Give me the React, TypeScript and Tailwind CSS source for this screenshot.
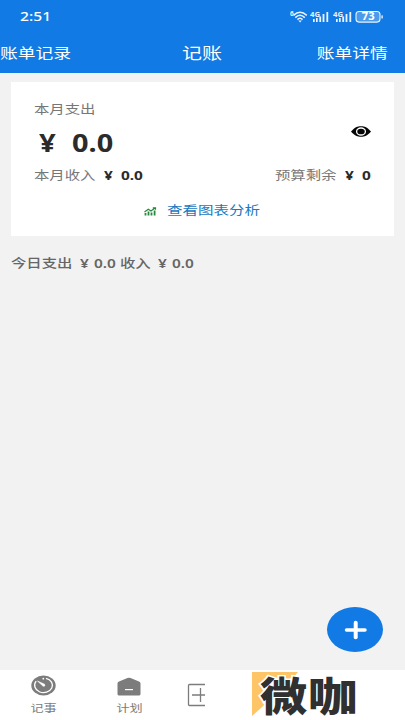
import React from 'react';
import clsx from 'clsx';

interface LabelProps {
  children: React.ReactNode;
  className?: string;
}

// Wide lettering used across the whole page
function Label({ children, className }: LabelProps) {
  return (
    <span className={clsx('inline-block whitespace-pre scale-x-125', className)}>{children}</span>
  );
}

function SignalIcon() {
  return (
    <svg width="19" height="14" viewBox="0 0 19 14" fill="#e8f3ff">
      <text x="0" y="6.8" fontSize="7.5" fontWeight="700" textLength="10" lengthAdjust="spacingAndGlyphs">4G</text>
      <rect x="3" y="9" width="1.7" height="3" />
      <rect x="6" y="8" width="1.7" height="4" />
      <rect x="9.3" y="6.5" width="1.8" height="5.5" />
      <rect x="12.6" y="4" width="1.8" height="8" />
      <rect x="16.4" y="2" width="1.8" height="10" />
    </svg>
  );
}

function StatusIcons() {
  return (
    <div className="flex items-center">
      <svg width="18" height="14" viewBox="0 0 18 14" fill="none" stroke="#e8f3ff" strokeWidth="1.5">
        <text x="0" y="6" fontSize="6.5" fontWeight="700" fill="#e8f3ff" stroke="none">6</text>
        <path d="M3.5 5.4Q10 -1 16.8 5.4" />
        <path d="M5.3 7.6Q10 3 14.8 7.6" />
        <path d="M7.4 9.6Q10 7 12.6 9.6" />
        <path d="M8.4 10.6h3.4l-1.7 1.8z" fill="#e8f3ff" stroke="none" />
      </svg>
      <div className="ml-[2px] mr-px flex gap-[4px]">
        <SignalIcon />
        <SignalIcon />
      </div>
      <svg className="ml-[2px]" width="29" height="14" viewBox="0 0 29 14">
        <rect x="1" y="1.5" width="24" height="10.6" rx="3" fill="#4b9bec" stroke="#e8f3ff" strokeWidth="1.1" />
        <rect x="26.4" y="5.2" width="1.4" height="3.4" rx="0.6" fill="#e8f3ff" />
        <text x="6.8" y="10.4" fontSize="10" fontWeight="700" fill="#fff" textLength="12.8" lengthAdjust="spacingAndGlyphs">73</text>
      </svg>
    </div>
  );
}

function EyeIcon() {
  return (
    <svg width="20" height="11" viewBox="0 0 20 11">
      <path d="M0 5.5C3.5 1.4 6.5 0.2 10 0.2S16.5 1.4 20 5.5C16.5 9.6 13.5 10.8 10 10.8S3.5 9.6 0 5.5z" fill="#050505" />
      <ellipse cx="10" cy="5.5" rx="4.4" ry="3.5" fill="none" stroke="#fff" strokeWidth="1.3" />
    </svg>
  );
}

function ChartIcon() {
  return (
    <svg width="13" height="9" viewBox="0 0 13 9" fill="none" stroke="#27893f">
      <path d="M1.5 8.5V6M4.5 8.5V4.5M7.5 8.5V5.5M10.6 8.5V3.5" strokeWidth="1.8" />
      <path d="M0.5 5L4.3 2.3L7 4L11 1M8.8 0.8h2.7v2" strokeWidth="1.2" />
    </svg>
  );
}

function TimerIcon() {
  return (
    <svg width="25" height="21" viewBox="0 0 25 21">
      <ellipse cx="12.5" cy="10.5" rx="12.2" ry="10" fill="#7c7c7c" />
      <path d="M15 3.3A8.9 7.3 0 1 1 5.2 6.2" fill="none" stroke="#fff" strokeWidth="1.3" />
      <circle cx="12.3" cy="3.7" r="0.9" fill="#fff" />
      <path d="M6.5 6L13.6 9.3Q14.7 11.4 12.2 11.3z" fill="#fff" stroke="#fff" strokeWidth="0.6" strokeLinejoin="round" />
    </svg>
  );
}

function PlanIcon() {
  return (
    <svg width="24" height="19" viewBox="0 0 24 19">
      <path d="M0.5 6.5Q0.5 5 2 4.5L10.5 1Q12 0.3 13.5 1L22 4.5Q23.5 5 23.5 6.5V17Q23.5 18.5 21.8 18.5H2.2Q0.5 18.5 0.5 17z" fill="#7c7c7c" />
      <path d="M8 12.6h8" stroke="#fff" strokeWidth="1.2" />
    </svg>
  );
}

function Logo() {
  return (
    <svg width="110" height="50" viewBox="0 0 110 50">
      <path d="M0 2H46L36 14L9 38L0 46z" fill="#fdc566" />
      <g
        fontFamily="'Liberation Sans', 'Noto Sans CJK SC', sans-serif"
        fontWeight="900"
        fontSize="40"
        fill="#303030"
      >
        <g transform="translate(8 41.2) scale(1.18 1)">
          <text stroke="#fff" strokeWidth="3">微</text>
          <text>微</text>
        </g>
        <g transform="translate(56 41.2) scale(1.24 1)">
          <text>咖</text>
        </g>
      </g>
    </svg>
  );
}

export default function App() {
  return (
    <div className="flex h-[720px] w-[405px] flex-col overflow-hidden bg-[#f2f2f2] font-['Noto_Sans','Noto_Sans_CJK_SC',sans-serif]">
      {/* Status bar and title bar */}
      <header className="h-[73px] bg-[#117ae4] text-white">
        <div className="flex h-[33px] items-center justify-between pl-5 pr-[21px]">
          <Label className="origin-left pt-px text-[12.5px] font-medium">2:51</Label>
          <StatusIcons />
        </div>
        <div className="grid h-[40px] grid-cols-3 items-center pr-[17px] text-[14.2px]">
          <Label className="origin-left justify-self-start">账单记录</Label>
          <Label className="translate-x-[8px] justify-self-center text-[16px]">记账</Label>
          <Label className="origin-right justify-self-end">账单详情</Label>
        </div>
      </header>

      <main className="flex-1 px-[11px] pt-[9px]">
        {/* Monthly summary */}
        <section className="h-[154px] bg-white px-[23px] pt-[17px] text-[12.3px] text-[#777]">
          <div className="flex h-[22px] items-center">
            <Label className="origin-left">本月支出</Label>
          </div>
          <div className="flex h-[44px] items-center justify-between">
            <div className="flex items-center text-[24.5px] font-bold text-[#2b2b2b]">
              <Label className="ml-[5px] w-[33px] origin-left scale-x-[1.2]">¥</Label>
              <Label className="origin-left scale-x-[1.18]">0.0</Label>
            </div>
            <span className="mt-[-24px]">
              <EyeIcon />
            </span>
          </div>
          <div className="flex h-[22px] items-center">
            <Label className="w-[70px] origin-left">本月收入</Label>
            <Label className="w-[17px] origin-left font-bold text-[#2b2b2b]">¥</Label>
            <Label className="origin-left font-bold text-[#2b2b2b]">0.0</Label>
            <Label className="ml-auto w-[70px] origin-left">预算剩余</Label>
            <Label className="w-[17px] origin-left font-bold text-[#2b2b2b]">¥</Label>
            <Label className="w-[9px] origin-left font-bold text-[#2b2b2b]">0</Label>
          </div>
          <div className="mt-[13px] flex h-[22px] items-center pl-[110px]">
            <ChartIcon />
            <Label className="ml-[10px] origin-left text-[12.4px] text-[#2179c0]">查看图表分析</Label>
          </div>
        </section>

        <div className="mt-[17px] flex h-[22px] items-center text-[12.3px] text-[#666]">
          <Label className="w-[69px] origin-left font-medium">今日支出</Label>
          <Label className="w-[14px] origin-left font-semibold">¥</Label>
          <Label className="w-[26px] origin-left font-semibold">0.0</Label>
          <Label className="w-[38px] origin-left font-medium">收入</Label>
          <Label className="w-[14px] origin-left font-semibold">¥</Label>
          <Label className="origin-left font-semibold">0.0</Label>
        </div>
      </main>

      <div className="mb-[18px] mr-[22px] flex h-[45px] w-[56px] items-center justify-center self-end rounded-[50%] bg-[#117ae4]">
        <svg className="ml-[2px]" width="24" height="20" viewBox="0 0 24 20" stroke="#fff" strokeLinecap="round">
          <path d="M2.5 10h18.5" strokeWidth="3.5" />
          <path d="M11.7 2.7v14.6" strokeWidth="4" />
        </svg>
      </div>

      <nav className="flex h-[50px] bg-white text-[10.5px] text-[#7c7c7c]">
        <div className="flex w-[86px] flex-col items-center pt-[5px]">
          <TimerIcon />
          <Label className="mt-[3px] leading-[18px]">记事</Label>
        </div>
        <div className="flex w-[86px] flex-col items-center pt-[7px]">
          <PlanIcon />
          <Label className="mt-[3px] leading-[18px]">计划</Label>
        </div>
        <div className="flex w-[33px] overflow-hidden pl-[15px] pt-[13px]">
          <svg className="shrink-0" width="27" height="24" viewBox="0 0 27 24" fill="none" stroke="#7c7c7c" strokeWidth="1.3">
            <rect x="1.5" y="1.5" width="24" height="21" rx="1" />
            <path d="M5 12h17M13.5 5v14" />
          </svg>
        </div>
        <div className="w-[200px] pl-[47px]">
          <Logo />
        </div>
      </nav>
    </div>
  );
}
